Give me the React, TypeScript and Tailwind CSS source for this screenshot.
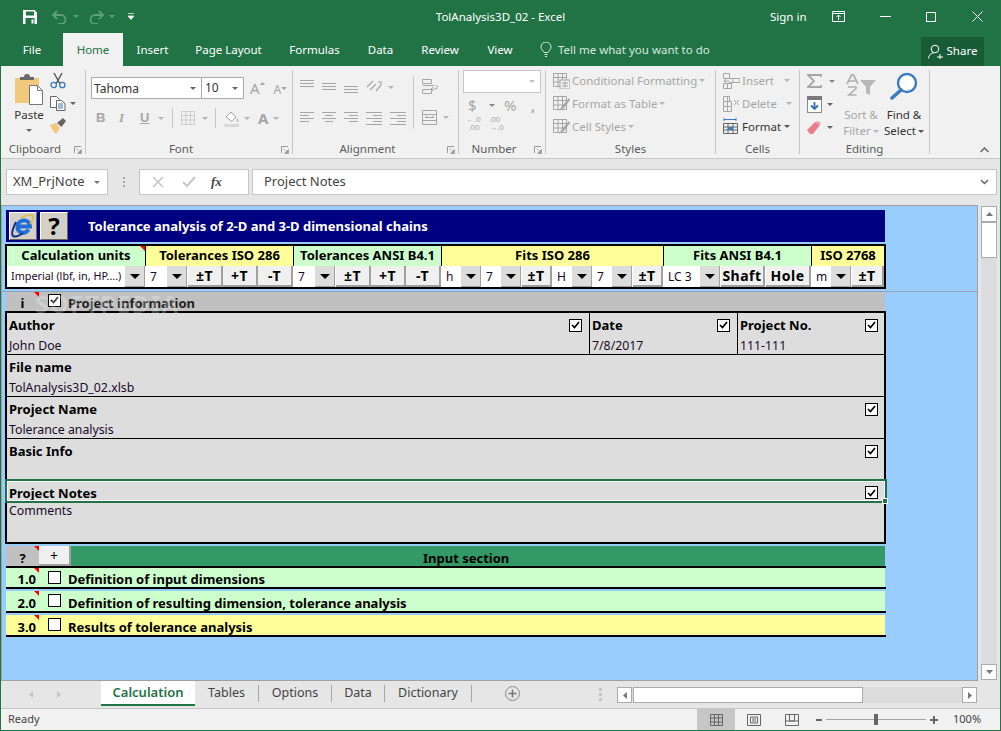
import { ReactNode } from "react";

const Caret = ({ className = "border-t-[#8a8a8a]" }: { className?: string }) => (
  <span className={`inline-block w-0 h-0 border-x-[3px] border-t-[3px] border-x-transparent ${className}`} />
);

const Launcher = () => (
  <svg width="8" height="8" viewBox="0 0 8 8" className="shrink-0">
    <path d="M0.500 7V0.500H7" fill="none" stroke="#9a9a9a" />
    <path d="M2.500 2.500l3.500 3.500M7.500 3.500v4h-4z" fill="#9a9a9a" stroke="#9a9a9a" strokeWidth="0.700" />
  </svg>
);

const Group = ({ w, label, launcher, children }: { w: string; label: string; launcher?: boolean; children: ReactNode }) => (
  <div className={`${w} shrink-0 mt-[4px] h-[84px] border-r border-[#c6c6c6] flex flex-col`}>
    <div className="h-[74px] flex">{children}</div>
    <div className="h-[10px] flex items-center relative">
      <span className={`flex-1 text-center text-[11.5px] leading-[10px] text-[#5c5c5c] ${launcher ? "pr-[16px]" : ""}`}>{label}</span>
      {launcher && <span className="absolute right-[3px] top-[2px] flex"><Launcher /></span>}
    </div>
  </div>
);

const Lines = ({ rows, w = 14 }: { rows: number[][]; w?: number }) => (
  <svg width={w} height="14" viewBox={`0 0 ${w} 14`}>
    {rows.map((r, i) => (
      <rect key={i} x={r[1]} y={r[0]} width={r[2]} height="1" fill="#a6a6a6" />
    ))}
  </svg>
);

const MiniGrid = ({ children }: { children?: ReactNode }) => (
  <svg width="17" height="16" viewBox="0 0 17 16">
    <path d="M0.500 0.500h13v13h-13zM0.500 4.500h13M0.500 9h13M5 0.500v13M9.500 0.500v13" fill="none" stroke="#a6a6a6" />
    {children}
  </svg>
);

const StyleRow = ({ icon, text, dark, caretGap }: { icon: ReactNode; text: string; dark?: boolean; caretGap: string }) => (
  <div className="h-[23px] flex items-center">
    <span className="w-[19px] flex shrink-0">{icon}</span>
    <span className={`text-[11.5px] whitespace-nowrap ${dark ? "text-[#333]" : "text-[#a6a6a6]"}`}>{text}</span>
    <span className={`${caretGap} flex`}><Caret className={dark ? "border-t-[#555]" : "border-t-[#b5b5b5]"} /></span>
  </div>
);

const Ribbon = () => (
  <div className="h-[93px] bg-[#f1f1f1] border-b border-[#c6c6c6] flex">
    <Group w="w-[85px]" label="Clipboard" launcher>
      <div className="w-[47px] pl-[9px] flex flex-col items-center">
        <svg width="30" height="32" viewBox="0 0 30 32" className="mt-[4px]">
          <rect x="1" y="4" width="24" height="25" fill="#f0c97d" />
          <path d="M6 6V3h4a3 3 0 0 1 6 0h4v3z" fill="#6a6a6a" />
          <path d="M15.500 11.500h8l5 5v14h-13z" fill="#fff" stroke="#767676" />
          <path d="M23.500 11.500v5h5" fill="none" stroke="#767676" />
        </svg>
        <span className="text-[11.5px] leading-[14px] mt-[2px] text-[#333]">Paste</span>
        <span className="flex mt-[7px]"><Caret className="border-t-[#666]" /></span>
      </div>
      <div className="flex flex-col pl-[2px]">
        <svg width="16" height="17" viewBox="0 0 16 17" className="mt-[2px]">
          <path d="M4 1l6 11M12 1L6 12" stroke="#555" strokeWidth="1.400" fill="none" />
          <circle cx="3.700" cy="13" r="2.700" fill="none" stroke="#3b7bbf" strokeWidth="1.300" />
          <circle cx="12.300" cy="13" r="2.700" fill="none" stroke="#3b7bbf" strokeWidth="1.300" />
        </svg>
        <div className="flex items-center mt-[7px]">
          <svg width="16" height="15" viewBox="0 0 16 15">
            <path d="M0.500 0.500h6l3 3v8h-9z" fill="#fff" stroke="#666" />
            <path d="M6.500 4.500h5l3.500 3v7h-8.500z" fill="#fff" stroke="#666" />
            <path d="M8 8h5M8 10h5M8 12h5" stroke="#3b7bbf" />
          </svg>
          <span className="ml-[4px] flex"><Caret className="border-t-[#666]" /></span>
        </div>
        <svg width="17" height="16" viewBox="0 0 17 16" className="mt-[7px]">
          <path d="M0 7l6-2 4 5-4 6-3-3z" fill="#f0c97d" />
          <path d="M7 5l6-5 3 3-4.500 6z" fill="#666" />
        </svg>
      </div>
    </Group>

    <Group w="w-[207px]" label="Font" launcher>
      <div className="pl-[5px] pt-[7px] flex flex-col">
        <div className="flex items-center h-[22px]">
          <div className="w-[111px] h-[22px] bg-white border border-[#ababab] flex items-center justify-between pl-[2px] pr-[5px] text-[12px] text-[#333]">
            <span className="mt-[1px]">Tahoma</span><Caret className="border-t-[#666]" />
          </div>
          <div className="w-[42px] h-[22px] bg-white border border-[#ababab] border-l-0 flex items-center justify-between pl-[3px] pr-[5px] text-[12px] text-[#333]">
            10<Caret className="border-t-[#666]" />
          </div>
          <span className="ml-[6px] text-[15px] text-[#a6a6a6] leading-none">A</span>
          <span className="mb-[8px]"><svg width="5" height="4"><path d="M0 3l2.500-3 2.500 3z" fill="#a6a6a6" /></svg></span>
          <span className="ml-[9px] text-[12px] text-[#a6a6a6] leading-none mt-[3px]">A</span>
          <span className="mb-[8px]"><Caret className="border-t-[#a6a6a6]" /></span>
        </div>
        <div className="flex items-center h-[20px] mt-[9px] text-[#a6a6a6]">
          <span className="ml-[5px] w-[23px] font-bold text-[13px] font-['Liberation_Sans',sans-serif]">B</span>
          <span className="w-[21px] italic text-[13px] font-['Liberation_Serif',serif] font-bold">I</span>
          <span className="w-[18px] underline font-bold text-[13px] font-['Liberation_Sans',sans-serif]">U</span>
          <Caret className="border-t-[#b5b5b5]" />
          <span className="w-px h-[20px] bg-[#c6c6c6] ml-[8px]" />
          <span className="ml-[8px] flex">
            <svg width="14" height="14" viewBox="0 0 14 14">
              <path d="M0.500 0.500h13v13h-13zM0.500 4.500h13M0.500 9h13M5 0.500v13M9.500 0.500v13" fill="none" stroke="#b0b0b0" strokeDasharray="1 1" />
            </svg>
          </span>
          <span className="ml-[7px] flex"><Caret className="border-t-[#b5b5b5]" /></span>
          <span className="w-px h-[20px] bg-[#c6c6c6] ml-[7px]" />
          <span className="ml-[8px] flex">
            <svg width="16" height="17" viewBox="0 0 16 17">
              <path d="M2 7l5-5 5 5-4 4.500z" fill="#fff" stroke="#a6a6a6" />
              <path d="M13 8c1 2 2 3 1 4-1 0-1.500-2-1-4z" fill="#a6a6a6" />
              <rect x="0" y="14" width="15" height="3" fill="#d9d9d9" />
            </svg>
          </span>
          <span className="ml-[4px] flex"><Caret className="border-t-[#b5b5b5]" /></span>
          <span className="ml-[8px] text-[15px] font-bold leading-none">A</span>
          <span className="ml-[5px] flex"><Caret className="border-t-[#b5b5b5]" /></span>
        </div>
      </div>
    </Group>

    <Group w="w-[166px]" label="Alignment" launcher>
      <div className="pl-[7px] pt-[9px] flex flex-col">
        <div className="flex items-center gap-[8px] h-[16px]">
          <Lines rows={[[0, 0, 14], [3, 0, 14], [6, 0, 14]]} />
          <Lines rows={[[3, 0, 14], [6, 0, 14], [9, 0, 14]]} />
          <Lines rows={[[6, 0, 14], [9, 0, 14], [12, 0, 14]]} />
          <svg width="16" height="16" viewBox="0 0 16 16">
            <path d="M1 8l6-6M4 11l6-6M10 12l5-6M12 3h3v3" fill="none" stroke="#a6a6a6" strokeWidth="1.200" />
          </svg>
          <span className="flex ml-[-2px]"><Caret className="border-t-[#b5b5b5]" /></span>
        </div>
        <div className="flex items-center gap-[8px] h-[16px] mt-[15px]">
          <Lines rows={[[1, 0, 14], [4, 0, 9], [7, 0, 14], [10, 0, 9]]} />
          <Lines rows={[[1, 0, 14], [4, 3, 8], [7, 0, 14], [10, 3, 8]]} />
          <Lines rows={[[1, 0, 14], [4, 5, 9], [7, 0, 14], [10, 5, 9]]} />
          <Lines w={16} rows={[[1, 0, 16], [4, 7, 9], [7, 0, 16], [10, 7, 9], [13, 0, 16]]} />
          <Lines w={16} rows={[[1, 0, 16], [4, 7, 9], [7, 0, 16], [10, 7, 9], [13, 0, 16]]} />
        </div>
      </div>
      <span className="w-px h-[53px] bg-[#c6c6c6] ml-[7px] mt-[6px]" />
      <div className="pl-[8px] pt-[9px] flex flex-col">
        <svg width="17" height="16" viewBox="0 0 17 16">
          <path d="M0.500 0.500h9v4h-9zM0.500 6.500h12M0.500 10.500h9v4h-9zM15 6v4h-6M11 8l-2 2 2 2" fill="none" stroke="#a6a6a6" />
        </svg>
        <div className="flex items-center mt-[15px]">
          <svg width="15" height="15" viewBox="0 0 15 15">
            <path d="M0.500 0.500h14v14h-14zM0.500 4.500h14M0.500 10.500h14M3 7.500h9M3 7.500l2-1.500M12 7.500l-2-1.500" fill="none" stroke="#a6a6a6" />
          </svg>
          <span className="ml-[6px] flex"><Caret className="border-t-[#b5b5b5]" /></span>
        </div>
      </div>
    </Group>

    <Group w="w-[87px]" label="Number" launcher>
      <div className="pl-[4px] flex flex-col">
        <div className="w-[78px] h-[23px] bg-white border border-[#c6c6c6] flex items-center justify-end pr-[5px]">
          <Caret className="border-t-[#c0c0c0]" />
        </div>
        <div className="flex items-center h-[18px] mt-[3px] text-[#a6a6a6]">
          <span className="ml-[5px] w-[21px] text-[15px]">$</span>
          <Caret className="border-t-[#888]" />
          <span className="ml-[9px] w-[27px] text-[15px]">%</span>
          <span className="text-[14px] font-bold">,</span>
        </div>
        <div className="flex mt-[2px] text-[#a6a6a6] text-[8px] leading-[8px] font-['Liberation_Sans',sans-serif]">
          <span className="ml-[3px] w-[23px]">←.0<br />&nbsp;.00</span>
          <span>.00<br />→.0</span>
        </div>
      </div>
    </Group>

    <Group w="w-[170px]" label="Styles">
      <div className="pl-[7px] mt-[-1px] flex flex-col">
        <StyleRow caretGap="ml-[2px]" text="Conditional Formatting" icon={<MiniGrid><rect x="7" y="7" width="10" height="9" fill="#f1f1f1" stroke="#a6a6a6" /><path d="M9 10h6M9 13h6M12 8.500v6" stroke="#a6a6a6" /></MiniGrid>} />
        <StyleRow caretGap="ml-[2px]" text="Format as Table" icon={<MiniGrid><path d="M6 15l3-5 7-8 1 2-6 8z" fill="#a6a6a6" /></MiniGrid>} />
        <StyleRow caretGap="ml-[2px]" text="Cell Styles" icon={<MiniGrid><path d="M6 15l3-5 7-8 1 2-6 8z" fill="#a6a6a6" /></MiniGrid>} />
      </div>
    </Group>

    <Group w="w-[84px]" label="Cells">
      <div className="pl-[7px] mt-[-1px] flex flex-col">
        <StyleRow caretGap="ml-[10px]" text="Insert" icon={
          <svg width="17" height="16" viewBox="0 0 17 16"><path d="M0.500 0.500h6v5h-6zM0.500 10.500h8v5h-8zM4.500 10.500v5M6 5.500h11v4H6M10 5.500v4M1 8h5M3 6l-2 2 2 2" fill="none" stroke="#a6a6a6" /></svg>
        } />
        <StyleRow caretGap="ml-[9px]" text="Delete" icon={
          <svg width="17" height="16" viewBox="0 0 17 16"><path d="M0.500 0.500h6v5h-6zM0.500 10.500h8v5h-8zM0.500 5.500h8v5h-8zM4.500 0.500v15M11 4l5 5M16 4l-5 5" fill="none" stroke="#a6a6a6" /></svg>
        } />
        <StyleRow dark caretGap="ml-[3px]" text="Format" icon={
          <svg width="17" height="17" viewBox="0 0 17 17"><path d="M0.500 5.500h14v10h-14zM0.500 9h14M0.500 12h14M5 5.500v10M10 5.500v10" fill="none" stroke="#666" /><rect x="5" y="9" width="5" height="3" fill="#3b7bbf" /><path d="M1 1.500h12M1 0v3M13 0v3" stroke="#3b7bbf" /></svg>
        } />
      </div>
    </Group>

    <Group w="w-[130px]" label="Editing">
      <div className="pl-[7px] flex flex-col w-[38px]">
        <div className="h-[23px] flex items-center text-[#a6a6a6]">
          <svg width="15" height="15" viewBox="0 0 15 15"><path d="M14 3V1H1l6 6-6 6h13v-2" fill="none" stroke="#a6a6a6" strokeWidth="1.800" /></svg>
          <span className="ml-[7px] flex"><Caret className="border-t-[#888]" /></span>
        </div>
        <div className="h-[23px] flex items-center">
          <svg width="15" height="17" viewBox="0 0 15 17"><rect x="0.500" y="0.500" width="14" height="16" fill="#fff" stroke="#8a8a8a" /><rect x="0" y="0" width="15" height="4" fill="#7a7a7a" /><path d="M7.500 6v7M4 9.500l3.500 3.500 3.500-3.500" fill="none" stroke="#2f6fb3" strokeWidth="1.800" /></svg>
          <span className="ml-[5px] flex"><Caret className="border-t-[#666]" /></span>
        </div>
        <div className="h-[23px] flex items-center">
          <svg width="15" height="14" viewBox="0 0 15 14"><path d="M0 9l8-8 5 3-7 9H3z" fill="#e87e8d" /><path d="M8 1l5 3 1-2-3-2z" fill="#f0a0aa" /></svg>
          <span className="ml-[5px] flex"><Caret className="border-t-[#666]" /></span>
        </div>
      </div>
      <div className="w-[41px] pl-[5px] flex flex-col items-center">
        <svg width="31" height="23" viewBox="0 0 31 23" className="mt-[4px] shrink-0">
          <path d="M1 10L6 0h1l5 10M3 7h7M2 13h8v1.500L3 21h7.500" fill="none" stroke="#b0b0b0" strokeWidth="1.700" />
          <path d="M14 6h16l-6 7v8l-4-2v-6z" fill="#b8b8b8" />
        </svg>
        <span className="text-[11.5px] leading-[16px] mt-[10px] text-[#a6a6a6] whitespace-nowrap">Sort &amp;</span>
        <span className="text-[11.5px] leading-[16px] text-[#a6a6a6] whitespace-nowrap flex items-center gap-[2px]">Filter<Caret className="border-t-[#b5b5b5]" /></span>
      </div>
      <div className="w-[44px] ml-[3px] flex flex-col items-center">
        <svg width="28" height="28" viewBox="0 0 28 28" className="mt-[2px] shrink-0">
          <circle cx="17" cy="11" r="9" fill="#fff" stroke="#3b7bbf" strokeWidth="2.400" />
          <path d="M11 18L2 26" stroke="#3b7bbf" strokeWidth="3.500" strokeLinecap="round" />
        </svg>
        <span className="text-[11.5px] leading-[16px] mt-[7px] text-[#333] whitespace-nowrap">Find &amp;</span>
        <span className="text-[11.5px] leading-[16px] text-[#333] whitespace-nowrap flex items-center gap-[2px]">Select<Caret className="border-t-[#555]" /></span>
      </div>
    </Group>

    <div className="flex-1 flex items-end justify-end pr-[11px] pb-[5px]">
      <svg width="9" height="6" viewBox="0 0 9 6"><path d="M0.500 5l4-4 4 4" fill="none" stroke="#666" strokeWidth="1.500" /></svg>
    </div>
  </div>
);

const TitleBar = () => (
  <div className="h-[33px] flex items-center text-white text-[11.5px]">
    <div className="w-[250px] flex items-center pl-[22px]">
      <svg width="14" height="14" viewBox="0 0 14 14">
        <path d="M0 0h11.500L14 2.500V14H0z" fill="#fff" />
        <rect x="3" y="1.500" width="8" height="4" fill="#217346" />
        <rect x="2.500" y="8" width="9" height="6" fill="#217346" />
        <rect x="8.500" y="9.500" width="2" height="4" fill="#fff" />
      </svg>
      <svg width="15" height="14" viewBox="0 0 15 14" className="ml-[15px]">
        <path d="M5 1L1 5l4 4M1 5h8a4.500 4.500 0 0 1 0 9H6" fill="none" stroke="#5f9d7e" strokeWidth="1.800" />
      </svg>
      <span className="ml-[6px] flex"><Caret className="border-t-[#5f9d7e]" /></span>
      <svg width="15" height="14" viewBox="0 0 15 14" className="ml-[10px]">
        <path d="M10 1l4 4-4 4M14 5H6a4.500 4.500 0 0 0 0 9h3" fill="none" stroke="#5f9d7e" strokeWidth="1.800" />
      </svg>
      <span className="ml-[5px] flex"><Caret className="border-t-[#5f9d7e]" /></span>
      <svg width="6" height="7" viewBox="0 0 6 7" className="ml-[13px]">
        <path d="M0 0.500h6M0 3h6L3 6.500z" fill="#fff" stroke="#fff" strokeWidth="0.700" />
      </svg>
    </div>
    <div className="flex-1 text-center whitespace-nowrap">TolAnalysis3D_02 - Excel</div>
    <div className="w-[250px] flex items-center pl-[20px]">
      <span className="w-[36px] whitespace-nowrap">Sign in</span>
      <svg width="14" height="11" viewBox="0 0 14 11" className="ml-[26px]">
        <path d="M0.500 0.500h12v10h-12zM0.500 2.500h12M6.500 9V4.500M4.500 6l2-2 2 2" fill="none" stroke="#fff" />
      </svg>
      <span className="ml-[34px] w-[11px] h-px bg-white" />
      <span className="ml-[35px] w-[10px] h-[10px] border border-white" />
      <svg width="11" height="11" viewBox="0 0 11 11" className="ml-[36px]">
        <path d="M0.500 0.500l10 10M10.500 0.500l-10 10" stroke="#fff" />
      </svg>
    </div>
  </div>
);

const TabLabel = ({ w, children }: { w: string; children: ReactNode }) => (
  <div className={`${w} shrink-0 text-center text-[11.5px] text-white`}>{children}</div>
);

const MenuTabs = () => (
  <div className="h-[33px] flex items-center">
    <TabLabel w="w-[62px]">File</TabLabel>
    <div className="w-[60px] h-[33px] bg-[#f1f1f1] text-[#217346] text-[11.5px] flex items-center justify-center">Home</div>
    <TabLabel w="w-[59px]">Insert</TabLabel>
    <TabLabel w="w-[93px]">Page Layout</TabLabel>
    <TabLabel w="w-[79px]">Formulas</TabLabel>
    <TabLabel w="w-[53px]">Data</TabLabel>
    <TabLabel w="w-[66px]">Review</TabLabel>
    <TabLabel w="w-[54px]">View</TabLabel>
    <div className="ml-[13px] flex items-center text-[11.5px] text-[#d6e8de]">
      <svg width="12" height="15" viewBox="0 0 12 15">
        <path d="M4 10.500C3 8.500 1 7.500 1 5a5 5 0 0 1 10 0c0 2.500-2 3.500-3 5.500zM4.500 12.500h3M5 14.500h2" fill="none" stroke="#d6e8de" />
      </svg>
      <span className="ml-[6px] whitespace-nowrap">Tell me what you want to do</span>
    </div>
    <div className="ml-auto mr-[16px] mt-[3px] w-[63px] h-[29px] bg-[#185c37] text-white text-[11.5px] flex items-center justify-center gap-[4px]">
      <svg width="15" height="15" viewBox="0 0 15 15">
        <circle cx="7" cy="5" r="3.800" fill="none" stroke="#fff" />
        <path d="M0.500 14.500c0-3 2.500-5.500 5-5.500M9 13h6M12 10v6" fill="none" stroke="#fff" />
      </svg>
      Share
    </div>
  </div>
);

const FormulaBar = () => (
  <div className="h-[46px] bg-[#e6e6e6] flex items-start pt-[10px] pl-[5px] text-[#444]">
    <div className="w-[102px] h-[26px] bg-white border border-[#c6c6c6] flex items-center justify-between pl-[6px] pr-[7px] text-[13px]">
      XM_PrjNote<Caret className="border-t-[#777]" />
    </div>
    <div className="w-[31px] h-[26px] flex flex-col items-center justify-center gap-[2px]">
      <span className="w-[2px] h-[2px] bg-[#a6a6a6]" />
      <span className="w-[2px] h-[2px] bg-[#a6a6a6]" />
      <span className="w-[2px] h-[2px] bg-[#a6a6a6]" />
    </div>
    <div className="w-[110px] h-[26px] bg-white border border-[#c6c6c6] flex items-center pl-[12px]">
      <svg width="12" height="12" viewBox="0 0 12 12"><path d="M1 1l10 10M11 1L1 11" stroke="#c6c6c6" strokeWidth="1.600" /></svg>
      <svg width="14" height="12" viewBox="0 0 14 12" className="ml-[18px]"><path d="M1 6l4 4 8-9" fill="none" stroke="#c6c6c6" strokeWidth="2" /></svg>
      <span className="ml-[15px] italic font-bold text-[13px] font-['Liberation_Serif',serif]">fx</span>
    </div>
    <div className="ml-[3px] w-[745px] h-[26px] bg-white border border-[#c6c6c6] flex items-center justify-between pl-[11px] pr-[7px] text-[13px]">
      Project Notes
      <svg width="9" height="6" viewBox="0 0 9 6"><path d="M1 1l3.500 3.500L8 1" fill="none" stroke="#666" strokeWidth="1.500" /></svg>
    </div>
  </div>
);

const Red = () => (
  <span className="absolute top-0 right-0 w-0 h-0 border-t-[5px] border-l-[5px] border-t-[#ff0000] border-l-transparent" />
);

const Check = ({ on = false }: { on?: boolean }) => (
  <span className="w-[13px] h-[13px] shrink-0 bg-white border border-black flex items-center justify-center">
    {on && (
      <svg width="9" height="8" viewBox="0 0 9 8"><path d="M1 4l2.500 2.500L8 1" fill="none" stroke="#000" strokeWidth="1.700" /></svg>
    )}
  </span>
);

const Head = ({ w, bg, note, border = true, children }: { w: string; bg: string; note?: boolean; border?: boolean; children: ReactNode }) => (
  <div className={`${w} ${bg} ${border ? "border-r border-black" : ""} relative h-[20px] flex items-center justify-center font-bold text-[13px] whitespace-nowrap`}>
    {children}
    {note && <Red />}
  </div>
);

const Combo = ({ w, small, children }: { w: string; small?: boolean; children: ReactNode }) => (
  <div className="flex h-[21px] shrink-0">
    <div className={`${w} flex items-center pl-[4px] ${small ? "text-[10.8px]" : "text-[12px]"} text-[#1a0a2a] whitespace-nowrap overflow-hidden`}>{children}</div>
    <div className="w-[20px] bg-[#dcdcdc] border-r border-b border-[#a0a0a0] flex items-center justify-center">
      <span className="w-0 h-0 border-x-[5px] border-t-[5px] border-x-transparent border-t-black" />
    </div>
  </div>
);

const Btn = ({ w, children }: { w: string; children: ReactNode }) => (
  <div className={`${w} h-[21px] shrink-0 bg-[#f0f0f0] border-r-2 border-b-2 border-[#a0a0a0] flex items-center justify-center font-bold text-[14px] tracking-[0.5px]`}>{children}</div>
);

const SheetHeader = () => (
  <div className="pl-[4px] pt-[4px] pb-[2px] border-b border-[#8fa7bd]">
    <div className="w-[879px] h-[32px] bg-[#000080] flex items-center pl-[3px]">
      <div className="w-[28px] h-[28px] bg-[#d4d0c8] border border-t-white border-l-white border-r-[#666] border-b-[#666] flex items-center justify-center">
        <svg width="24" height="24" viewBox="0 0 24 24">
          <path d="M6 12.500h13c0-8-12-8-12.500 0 0 7 8 8 11 3" fill="none" stroke="#1f6fd6" strokeWidth="4" />
          <path d="M7 12.500h10" stroke="#1f6fd6" strokeWidth="2" />
          <path d="M10 4c5-3 11-4 12-2 1 2-1 5-3 8" fill="none" stroke="#d9b93c" strokeWidth="1.500" />
          <path d="M5 8C2 14 0 20 2 22c2 1 6 0 10-3" fill="none" stroke="#12318f" strokeWidth="2" />
        </svg>
      </div>
      <div className="ml-[3px] w-[28px] h-[28px] bg-[#d4d0c8] border border-t-white border-l-white border-r-[#666] border-b-[#666] flex items-center justify-center font-bold text-[24px] leading-none text-black">?</div>
      <span className="ml-[20px] mt-[1px] text-white font-bold text-[13px] whitespace-nowrap">Tolerance analysis of 2-D and 3-D dimensional chains</span>
    </div>
    <div className="mt-[2px] ml-[-1px] w-[881px] h-[45px] border-2 border-black">
      <div className="flex">
        <Head w="w-[139px]" bg="bg-[#ccffcc]" note>Calculation units</Head>
        <Head w="w-[148px]" bg="bg-[#ffff99]">Tolerances ISO 286</Head>
        <Head w="w-[148px]" bg="bg-[#ccffcc]">Tolerances ANSI B4.1</Head>
        <Head w="w-[222px]" bg="bg-[#ffff99]">Fits ISO 286</Head>
        <Head w="w-[148px]" bg="bg-[#ccffcc]">Fits ANSI B4.1</Head>
        <Head w="w-[72px]" bg="bg-[#ffff99]" border={false}>ISO 2768</Head>
      </div>
      <div className="flex bg-white gap-px">
        <Combo w="w-[118px]" small>Imperial (lbf, in, HP....)</Combo>
        <Combo w="w-[21px]">7</Combo>
        <Btn w="w-[35px]">±T</Btn>
        <Btn w="w-[35px] ml-[-1px]">+T</Btn>
        <Btn w="w-[35px] ml-[-1px]">-T</Btn>
        <Combo w="w-[21px]">7</Combo>
        <Btn w="w-[35px]">±T</Btn>
        <Btn w="w-[35px] ml-[-1px]">+T</Btn>
        <Btn w="w-[35px] ml-[-1px]">-T</Btn>
        <Combo w="w-[19px]">h</Combo>
        <Combo w="w-[19px]">7</Combo>
        <Btn w="w-[30px]">±T</Btn>
        <Combo w="w-[19px]">H</Combo>
        <Combo w="w-[19px]">7</Combo>
        <Btn w="w-[30px]">±T</Btn>
        <Combo w="w-[36px]">LC 3</Combo>
        <Btn w="w-[44px]">Shaft</Btn>
        <Btn w="w-[45px]">Hole</Btn>
        <Combo w="w-[19px]">m</Combo>
        <Btn w="w-[32px]">±T</Btn>
      </div>
    </div>
  </div>
);

const InfoRow = ({ label, value, check = true }: { label: string; value: string; check?: boolean }) => (
  <div className="h-[42px] border-b border-black">
    <div className="h-[24px] flex items-center justify-between pl-[2px] pr-[6px]">
      <span className="font-bold text-[13px] mt-[1px]">{label}</span>
      {check && <Check on />}
    </div>
    <div className="h-[17px] pl-[2px] pt-[2px] flex items-center text-[12.3px] text-[#1a0a2a]">{value}</div>
  </div>
);

const InfoCell = ({ w, label, value, last }: { w: string; label: string; value: string; last?: boolean }) => (
  <div className={`${w} ${last ? "pr-[6px]" : "pr-[7px] border-r border-black"} pl-[2px]`}>
    <div className="h-[24px] flex items-center justify-between">
      <span className="font-bold text-[13px] mt-[1px]">{label}</span>
      <Check on />
    </div>
    <div className="h-[17px] pt-[2px] flex items-center text-[12.3px] text-[#1a0a2a]">{value}</div>
  </div>
);

const ProjectInfo = () => (
  <div className="pl-[4px] relative">
    <div className="w-[879px] h-[19px] bg-[#c0c0c0] flex items-center">
      <div className="w-[33px] h-[19px] relative flex items-center justify-center font-bold text-[13px]"><span className="mt-[4px]">i</span><Red /></div>
      <span className="ml-[9px] mb-[3px]"><Check on /></span>
      <span className="ml-[7px] mt-[4px] font-bold text-[13px] text-[#222]">Project information</span>
    </div>
    <div className="ml-[-1px] w-[881px] border-2 border-black bg-[#dddddd]">
      <div className="h-[42px] border-b border-black flex">
        <InfoCell w="w-[583px]" label="Author" value="John Doe" />
        <InfoCell w="w-[148px]" label="Date" value="7/8/2017" />
        <InfoCell w="w-[146px]" label="Project No." value="111-111" last />
      </div>
      <InfoRow label="File name" value="TolAnalysis3D_02.xlsb" check={false} />
      <InfoRow label="Project Name" value="Tolerance analysis" />
      <div className="h-[40px]">
        <div className="h-[24px] flex items-center justify-between pl-[2px] pr-[6px]">
          <span className="font-bold text-[13px] mt-[1px]">Basic Info</span>
          <Check on />
        </div>
      </div>
      <div className="h-[24px] relative flex items-center justify-between pl-[2px] pr-[6px]">
        <span className="font-bold text-[13px] mt-[6px]">Project Notes</span>
        <span className="mt-[3px]"><Check on /></span>
        <div className="absolute top-0 bottom-0 left-[-2px] right-[-3px] border-2 border-[#217346]">
          <div className="w-full h-full border border-white" />
        </div>
        <span className="absolute right-[-4px] bottom-[-1px] w-[6px] h-[6px] bg-[#217346] border border-white" />
      </div>
      <div className="h-[39px] pl-[2px] text-[12.3px] text-[#1a0a2a] leading-[16px]">Comments</div>
    </div>
    <span className="absolute left-[33px] top-0 text-[24px] font-bold text-white/25 leading-none tracking-[1.5px] pointer-events-none">SOFTPEDIA</span>
  </div>
);

const SectionRow = ({ num, label, bg, h, shift }: { num: string; label: string; bg: string; h: string; shift: string }) => (
  <div className="mt-[2px] ml-[4px] w-[880px] border-b-2 border-black">
    <div className={`w-[879px] ${h} ${bg} flex items-center`}>
      <div className="w-[33px] h-full relative flex items-center justify-end font-bold text-[13px]"><span className={`pr-[3px] ${shift}`}>{num}</span><Red /></div>
      <span className="ml-[9px] mb-[1px]"><Check /></span>
      <span className={`ml-[7px] ${shift} font-bold text-[13px] whitespace-nowrap`}>{label}</span>
    </div>
  </div>
);

const Sections = () => (
  <>
    <div className="mt-[2px] ml-[4px] w-[880px] border-b-2 border-black">
      <div className="w-[879px] h-[20px] bg-[#339966] flex items-center">
        <div className="w-[33px] h-full bg-[#c0c0c0] relative flex items-center justify-center font-bold text-[13px]"><span className="mt-[5px]">?</span><Red /></div>
        <div className="w-[32px] h-full bg-[#f0f0f0] border-r-2 border-b-2 border-[#a0a0a0] flex items-center justify-center text-[14px]">+</div>
        <span className="ml-[352px] mt-[5px] font-bold text-[13px] whitespace-nowrap">Input section</span>
      </div>
    </div>
    <div className="mt-[-2px]">
      <SectionRow h="h-[19px]" shift="mt-[4px]" bg="bg-[#ccffcc]" num="1.0" label="Definition of input dimensions" />
    </div>
    <SectionRow h="h-[20px]" shift="mt-[6px]" bg="bg-[#ccffcc]" num="2.0" label="Definition of resulting dimension, tolerance analysis" />
    <SectionRow h="h-[20px]" shift="mt-[6px]" bg="bg-[#ffff99]" num="3.0" label="Results of tolerance analysis" />
  </>
);

const ScrollBar = () => (
  <div className="flex-1 bg-[#e6e6e6] pl-[3px] pt-[1px]">
    <div className="w-[16px] h-[474px] bg-[#dcdcdc] flex flex-col">
      <div className="h-[16px] bg-white border border-[#ababab] flex items-center justify-center">
        <svg width="7" height="4"><path d="M0 4l3.500-4L7 4z" fill="#777" /></svg>
      </div>
      <div className="h-[36px] bg-white border border-[#ababab]" />
      <div className="flex-1" />
      <div className="h-[16px] bg-white border border-[#ababab] flex items-center justify-center">
        <svg width="7" height="4"><path d="M0 0l3.500 4L7 0z" fill="#777" /></svg>
      </div>
    </div>
  </div>
);

const SheetTab = ({ w, children }: { w: string; children: ReactNode }) => (
  <div className={`${w} h-[17px] mt-[4px] border-r border-[#a6a6a6] flex items-center justify-center text-[12.5px] text-[#444] whitespace-nowrap`}>{children}</div>
);

const SheetTabs = () => (
  <div className="h-[27px] bg-[#e6e6e6] flex items-start">
    <div className="w-[100px] h-[26px] flex items-center pl-[28px] gap-[24px]">
      <svg width="4" height="7"><path d="M4 0v7L0 3.500z" fill="#c6c6c6" /></svg>
      <svg width="4" height="7"><path d="M0 0v7l4-3.500z" fill="#c6c6c6" /></svg>
    </div>
    <div className="w-[94px] h-[25px] bg-white border-b-2 border-[#217346] flex items-center justify-center font-semibold text-[13px] text-[#217346]">Calculation</div>
    <SheetTab w="w-[64px]">Tables</SheetTab>
    <SheetTab w="w-[73px]">Options</SheetTab>
    <SheetTab w="w-[53px]">Data</SheetTab>
    <SheetTab w="w-[87px]">Dictionary</SheetTab>
    <svg width="15" height="15" viewBox="0 0 15 15" className="ml-[33px] mt-[5px]">
      <circle cx="7.500" cy="7.500" r="7" fill="none" stroke="#888" />
      <path d="M7.500 3.500v8M3.500 7.500h8" stroke="#777" strokeWidth="1.500" />
    </svg>
    <div className="ml-[79px] mt-[7px] flex flex-col gap-[2px]">
      <span className="w-[3px] h-[3px] bg-[#c6c6c6]" />
      <span className="w-[3px] h-[3px] bg-[#c6c6c6]" />
      <span className="w-[3px] h-[3px] bg-[#c6c6c6]" />
    </div>
    <div className="ml-[15px] mt-[6px] w-[360px] h-[16px] bg-[#dcdcdc] flex">
      <div className="w-[15px] bg-white border border-[#ababab] flex items-center justify-center">
        <svg width="4" height="7"><path d="M4 0v7L0 3.500z" fill="#777" /></svg>
      </div>
      <div className="w-[230px] ml-px bg-white border border-[#ababab]" />
      <div className="flex-1" />
      <div className="w-[15px] bg-white border border-[#ababab] flex items-center justify-center">
        <svg width="4" height="7"><path d="M0 0v7l4-3.500z" fill="#777" /></svg>
      </div>
    </div>
  </div>
);

const StatusBar = () => (
  <div className="h-[22px] bg-[#f1f1f1] border-t border-[#c6c6c6] flex items-center text-[11px] text-[#444]">
    <span className="ml-[7px]">Ready</span>
    <div className="ml-auto h-full w-[38px] bg-[#c6c6c6] flex items-center justify-center">
      <svg width="13" height="12" viewBox="0 0 13 12"><path d="M0.500 0.500h12v11h-12zM0.500 4h12M0.500 8h12M4.500 0.500v11M8.500 0.500v11" fill="none" stroke="#666" /></svg>
    </div>
    <svg width="14" height="12" viewBox="0 0 14 12" className="ml-[12px]"><path d="M0.500 0.500h13v11h-13zM3.500 3h7v6h-7zM5 5h4M5 7h4" fill="none" stroke="#666" /></svg>
    <svg width="14" height="12" viewBox="0 0 14 12" className="ml-[24px]"><path d="M0.500 0.500h13v11h-13zM0.500 7h13M4.500 0.500V7h5V0.500" fill="none" stroke="#666" /></svg>
    <span className="ml-[17px] w-[6px] h-[2px] bg-[#666]" />
    <div className="ml-[4px] w-[100px] h-px bg-[#a6a6a6] flex items-center justify-center">
      <span className="w-[4px] h-[11px] bg-[#666]" />
    </div>
    <svg width="8" height="8" viewBox="0 0 8 8" className="ml-[4px]"><path d="M4 0v8M0 4h8" stroke="#666" strokeWidth="2" /></svg>
    <span className="ml-[15px] mr-[19px] w-[28px] whitespace-nowrap">100%</span>
  </div>
);

export default function App() {
  return (
    <div className="w-[1001px] h-[731px] overflow-hidden bg-[#217346] border-x border-b border-[#217346] flex flex-col font-['Noto_Sans',sans-serif] text-black">
      <TitleBar />
      <MenuTabs />
      <Ribbon />
      <FormulaBar />
      <div className="h-[476px] flex">
        <div className="w-[977px] bg-[#99ccff] border border-[#a0a0a0]">
          <SheetHeader />
          <ProjectInfo />
          <Sections />
        </div>
        <ScrollBar />
      </div>
      <SheetTabs />
      <StatusBar />
    </div>
  );
}
